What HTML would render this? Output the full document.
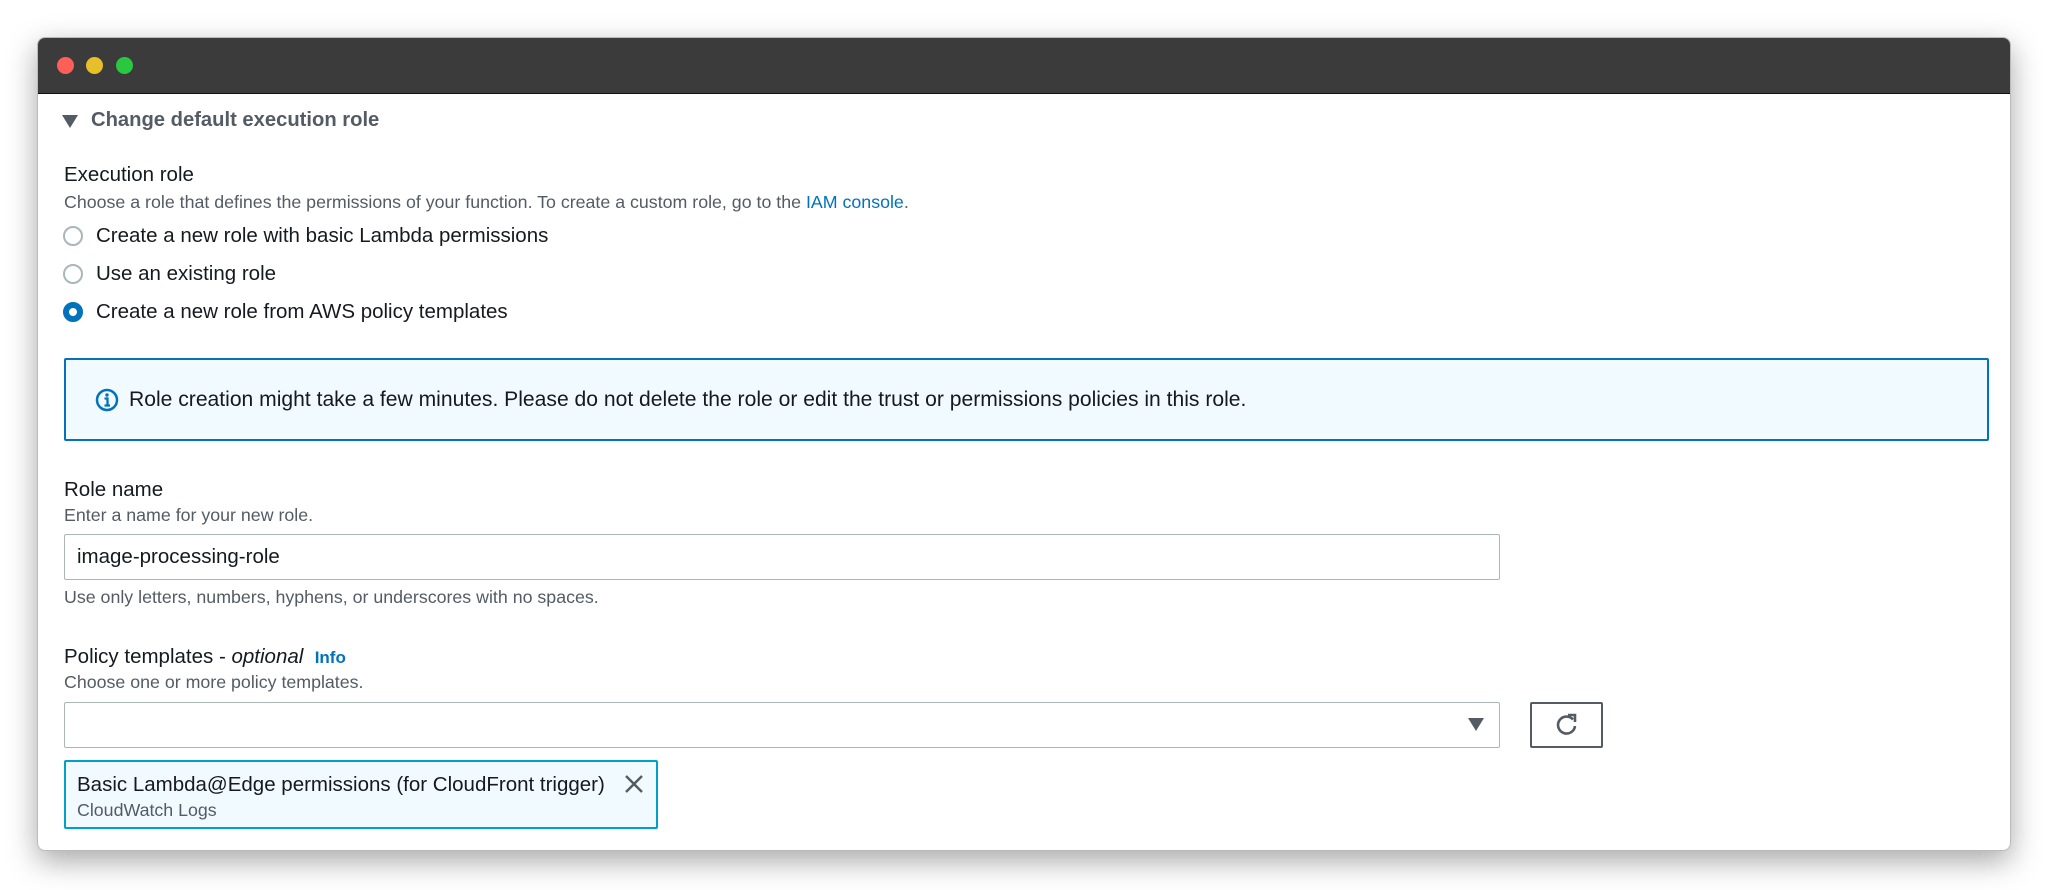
<!DOCTYPE html>
<html><head><style>
*{margin:0;padding:0;box-sizing:border-box}
body{width:2048px;height:890px;background:#fff;font-family:"Liberation Sans",Arial,sans-serif;position:relative;overflow:hidden;color:#16191f}
.win{position:absolute;left:37px;top:37px;width:1974px;height:814px;border-radius:8px;background:#fff;box-shadow:0 10px 30px rgba(0,0,0,.35);overflow:hidden;border:1px solid #bbb}
.tb{position:absolute;left:0;top:0;width:100%;height:56px;background:#3b3b3b;border-bottom:1px solid #111}
.dot{position:absolute;top:19px;width:17px;height:17px;border-radius:50%}
.a{position:absolute;white-space:nowrap}
.lbl{font-size:20.5px;color:#16191f}
.desc{font-size:17.8px;color:#545b64}
.radio{position:absolute;width:20px;height:20px;border-radius:50%;border:2px solid #aab7b8;background:#fff}
.radio.on{border:6px solid #0073bb}
.box{position:absolute;border:1px solid #aab7b8;border-radius:2px;background:#fff}
</style></head><body>
<div class="win">
<div class="tb">
<div class="dot" style="left:19px;background:#fe5f57"></div>
<div class="dot" style="left:48px;background:#e6bf2a"></div>
<div class="dot" style="left:78px;background:#2ac840"></div>
</div>
<svg class="a" style="left:24px;top:77px" width="16" height="14"><path d="M0 0H16L8 13Z" fill="#545b64"/></svg>
<div class="a" style="left:53px;top:71px;font-size:20.2px;font-weight:bold;color:#545b64">Change default execution role</div>

<div class="a lbl" style="left:26px;top:125px">Execution role</div>
<div class="a desc" style="left:26px;top:154px">Choose a role that defines the permissions of your function. To create a custom role, go to the <span style="color:#0073bb">IAM console</span>.</div>

<div class="radio" style="left:25px;top:188px"></div>
<div class="a lbl" style="left:58px;top:186px">Create a new role with basic Lambda permissions</div>
<div class="radio" style="left:25px;top:226px"></div>
<div class="a lbl" style="left:58px;top:224px">Use an existing role</div>
<div class="radio on" style="left:25px;top:264px"></div>
<div class="a lbl" style="left:58px;top:262px">Create a new role from AWS policy templates</div>

<div class="a" style="left:26px;top:320px;width:1925px;height:83px;border:2px solid #0073bb;background:#f1faff;border-radius:2px"></div>
<svg class="a" style="left:57px;top:350px" width="24" height="24"><circle cx="12" cy="12" r="10" fill="none" stroke="#0073bb" stroke-width="2.5"/><circle cx="12" cy="7" r="1.7" fill="#0073bb"/><path d="M9.5 10.5H12.5V17M9.5 17.5H15" stroke="#0073bb" stroke-width="2.3" fill="none"/></svg>
<div class="a" style="left:91px;top:350px;font-size:21.1px">Role creation might take a few minutes. Please do not delete the role or edit the trust or permissions policies in this role.</div>

<div class="a lbl" style="left:26px;top:440px">Role name</div>
<div class="a desc" style="left:26px;top:467px">Enter a name for your new role.</div>
<div class="box" style="left:26px;top:496px;width:1436px;height:46px"></div>
<div class="a lbl" style="left:39px;top:507px">image-processing-role</div>
<div class="a desc" style="left:26px;top:549px">Use only letters, numbers, hyphens, or underscores with no spaces.</div>

<div class="a lbl" style="left:26px;top:607px">Policy templates - <i>optional</i> &nbsp;<b style="color:#0073bb;font-size:17px">Info</b></div>
<div class="a desc" style="left:26px;top:634px">Choose one or more policy templates.</div>
<div class="box" style="left:26px;top:664px;width:1436px;height:46px"></div>
<svg class="a" style="left:1430px;top:680px" width="16" height="14"><path d="M0 0H16L8 13Z" fill="#545b64"/></svg>
<div class="a" style="left:1492px;top:664px;width:73px;height:46px;border:2px solid #545b64;border-radius:2px"></div>
<svg class="a" style="left:1516px;top:675px" width="26" height="26"><path d="M19 6.5A8.5 8.5 0 1 0 21 13" fill="none" stroke="#545b64" stroke-width="2.6"/><path d="M14 2H21V9" fill="none" stroke="#545b64" stroke-width="2.6"/></svg>

<div class="a" style="left:26px;top:722px;width:594px;height:69px;border:2px solid #00a1c9;background:#f1faff;border-radius:2px"></div>
<div class="a lbl" style="left:39px;top:735px">Basic Lambda@Edge permissions (for CloudFront trigger)</div>
<div class="a desc" style="left:39px;top:762px">CloudWatch Logs</div>
<svg class="a" style="left:586px;top:736px" width="20" height="20"><path d="M2 2L18 18M18 2L2 18" stroke="#545b64" stroke-width="2.4"/></svg>
</div>
</body></html>
